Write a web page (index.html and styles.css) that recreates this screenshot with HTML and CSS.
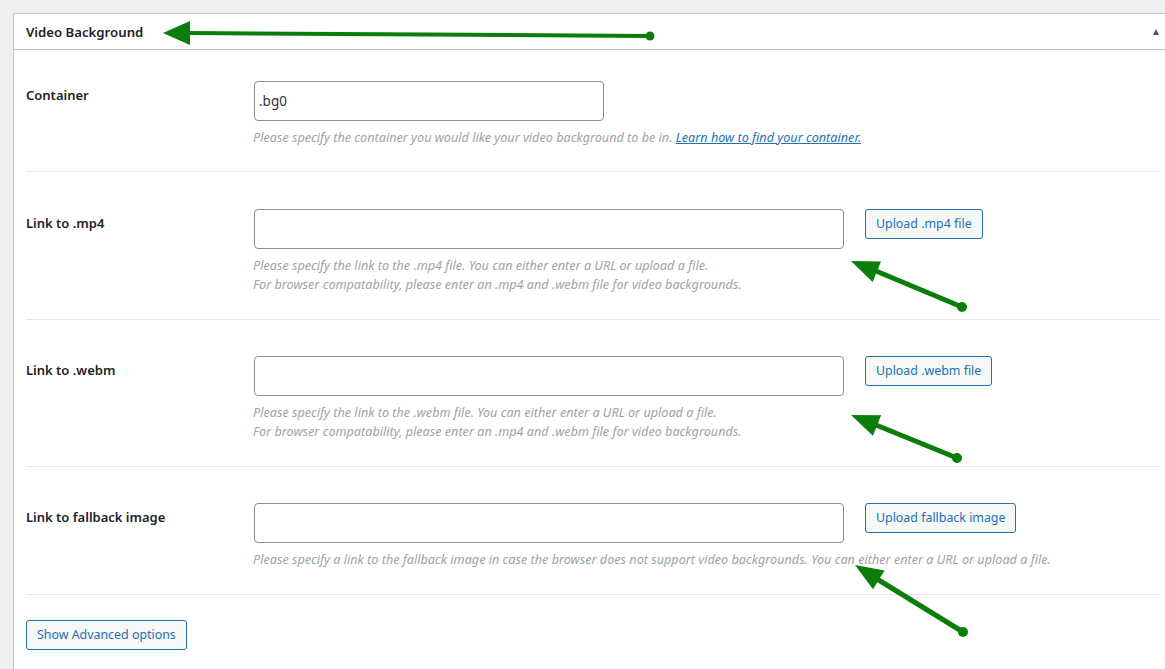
FILE: index.html
```html
<!DOCTYPE html>
<html lang="en">
<head>
<meta charset="utf-8">
<title>Video Background</title>
<link rel="stylesheet" href="styles.css">
</head>
<body>
<div class="page">
  <div class="panel">
    <div class="panel-head">
      <h2 class="panel-title">Video Background</h2>
      <span class="toggle-indicator"></span>
    </div>
    <div class="panel-body">
      <div class="row row-first">
        <div class="label">Container</div>
        <div class="field">
          <div class="controls">
            <input class="text-input input-short" type="text" value=".bg0">
          </div>
          <p class="desc">Please specify the container you would like your video background to be in. <a href="#">Learn how to find your container.</a></p>
        </div>
      </div>
      <div class="row row-second">
        <div class="label">Link to .mp4</div>
        <div class="field">
          <div class="controls">
            <input class="text-input input-long" type="text">
            <button class="btn" type="button">Upload .mp4 file</button>
          </div>
          <p class="desc">Please specify the link to the .mp4 file. You can either enter a URL or upload a file.<br>For browser compatability, please enter an .mp4 and .webm file for video backgrounds.</p>
        </div>
      </div>
      <div class="row">
        <div class="label">Link to .webm</div>
        <div class="field">
          <div class="controls">
            <input class="text-input input-long" type="text">
            <button class="btn" type="button">Upload .webm file</button>
          </div>
          <p class="desc">Please specify the link to the .webm file. You can either enter a URL or upload a file.<br>For browser compatability, please enter an .mp4 and .webm file for video backgrounds.</p>
        </div>
      </div>
      <div class="row">
        <div class="label">Link to fallback image</div>
        <div class="field">
          <div class="controls">
            <input class="text-input input-long" type="text">
            <button class="btn" type="button">Upload fallback image</button>
          </div>
          <p class="desc">Please specify a link to the fallback image in case the browser does not support video backgrounds. You can either enter a URL or upload a file.</p>
        </div>
      </div>
      <div class="advanced">
        <button class="btn" type="button">Show Advanced options</button>
      </div>
    </div>
  </div>
</div>
<svg class="annotations" width="1165" height="669" viewBox="0 0 1165 669">
  <g fill="#0b7d0b" stroke="#0b7d0b" stroke-linecap="round">
    <path d="M188 33 Q420 34 650 36" stroke-width="4" fill="none"/>
    <polygon points="163,33 190,21 190,45" stroke="none"/>
    <circle cx="650" cy="36" r="4.5" stroke="none"/>

    <line x1="876" y1="271" x2="962" y2="307" stroke-width="5"/>
    <polygon points="851,261 872.6,281.9 881,261.5" stroke="none"/>
    <circle cx="962" cy="307" r="5" stroke="none"/>

    <line x1="876" y1="425" x2="957" y2="458" stroke-width="5"/>
    <polygon points="851,415 872.9,435.7 881.1,415.3" stroke="none"/>
    <circle cx="957" cy="458" r="5" stroke="none"/>

    <line x1="877" y1="579" x2="963" y2="632" stroke-width="5"/>
    <polygon points="855,565 873,589.2 884.6,570.4" stroke="none"/>
    <circle cx="963" cy="632" r="5" stroke="none"/>
  </g>
</svg>
</body>
</html>
```

FILE: styles.css
```css
* { box-sizing: border-box; }

html, body {
  margin: 0;
  padding: 0;
  background: #f0f0f1;
  overflow: hidden;
  font-family: "Noto Sans", "Open Sans", "Liberation Sans", sans-serif;
  color: #1d2327;
}

.page {
  padding: 13px 0 0 13px;
  height: 669px;
}

.panel {
  width: 1160px;
  height: 700px;
  background: #fff;
  border: 1px solid #c3c4c7;
}

.panel-head {
  display: flex;
  align-items: center;
  height: 36px;
  padding: 0 13px 0 12px;
  border-bottom: 1px solid #c3c4c7;
}

.panel-title {
  margin: 0;
  font-size: 13.2px;
  font-weight: 600;
  line-height: 20px;
  color: #1d2327;
}

.toggle-indicator {
  margin-left: auto;
  width: 0;
  height: 0;
  border-left: 3.5px solid transparent;
  border-right: 3.5px solid transparent;
  border-bottom: 6px solid #50575e;
  margin-top: 1px;
}

.panel-body {
  padding: 0 12px;
}

.row {
  display: flex;
  padding: 36px 0 25px;
  border-bottom: 1px solid #e6e6e6;
}

.row-first {
  padding: 31px 0 24px;
}

.row-second {
  padding-top: 37px;
}

.label {
  width: 228px;
  flex: none;
  margin-top: 4px;
  font-size: 13px;
  font-weight: 600;
  line-height: 20px;
  color: #1d2327;
}

.field {
  flex: 1;
}

.controls {
  display: flex;
  align-items: flex-start;
  gap: 21px;
}

.text-input {
  height: 40px;
  padding: 0 4px;
  border: 1px solid #8c8f94;
  border-radius: 4px;
  background: #fff;
  font-family: inherit;
  font-size: 13.5px;
  color: #2c3338;
  outline: none;
}

.input-short { width: 350px; }
.input-long { width: 590px; }

.desc {
  margin: 7px 0 0 -1px;
  font-size: 12.65px;
  line-height: 19px;
  font-style: italic;
  color: #a0a2a6;
}

.desc a {
  color: #2271b1;
  text-decoration: underline;
}

.btn {
  height: 30px;
  padding: 0 10px;
  border: 1px solid #2271b1;
  border-radius: 3px;
  background: #f6f7f7;
  color: #2271b1;
  font-family: inherit;
  font-size: 12.4px;
  line-height: 28px;
  cursor: pointer;
  white-space: nowrap;
}

.advanced {
  padding-top: 25px;
}

.annotations {
  position: absolute;
  left: 0;
  top: 0;
  pointer-events: none;
}
```
